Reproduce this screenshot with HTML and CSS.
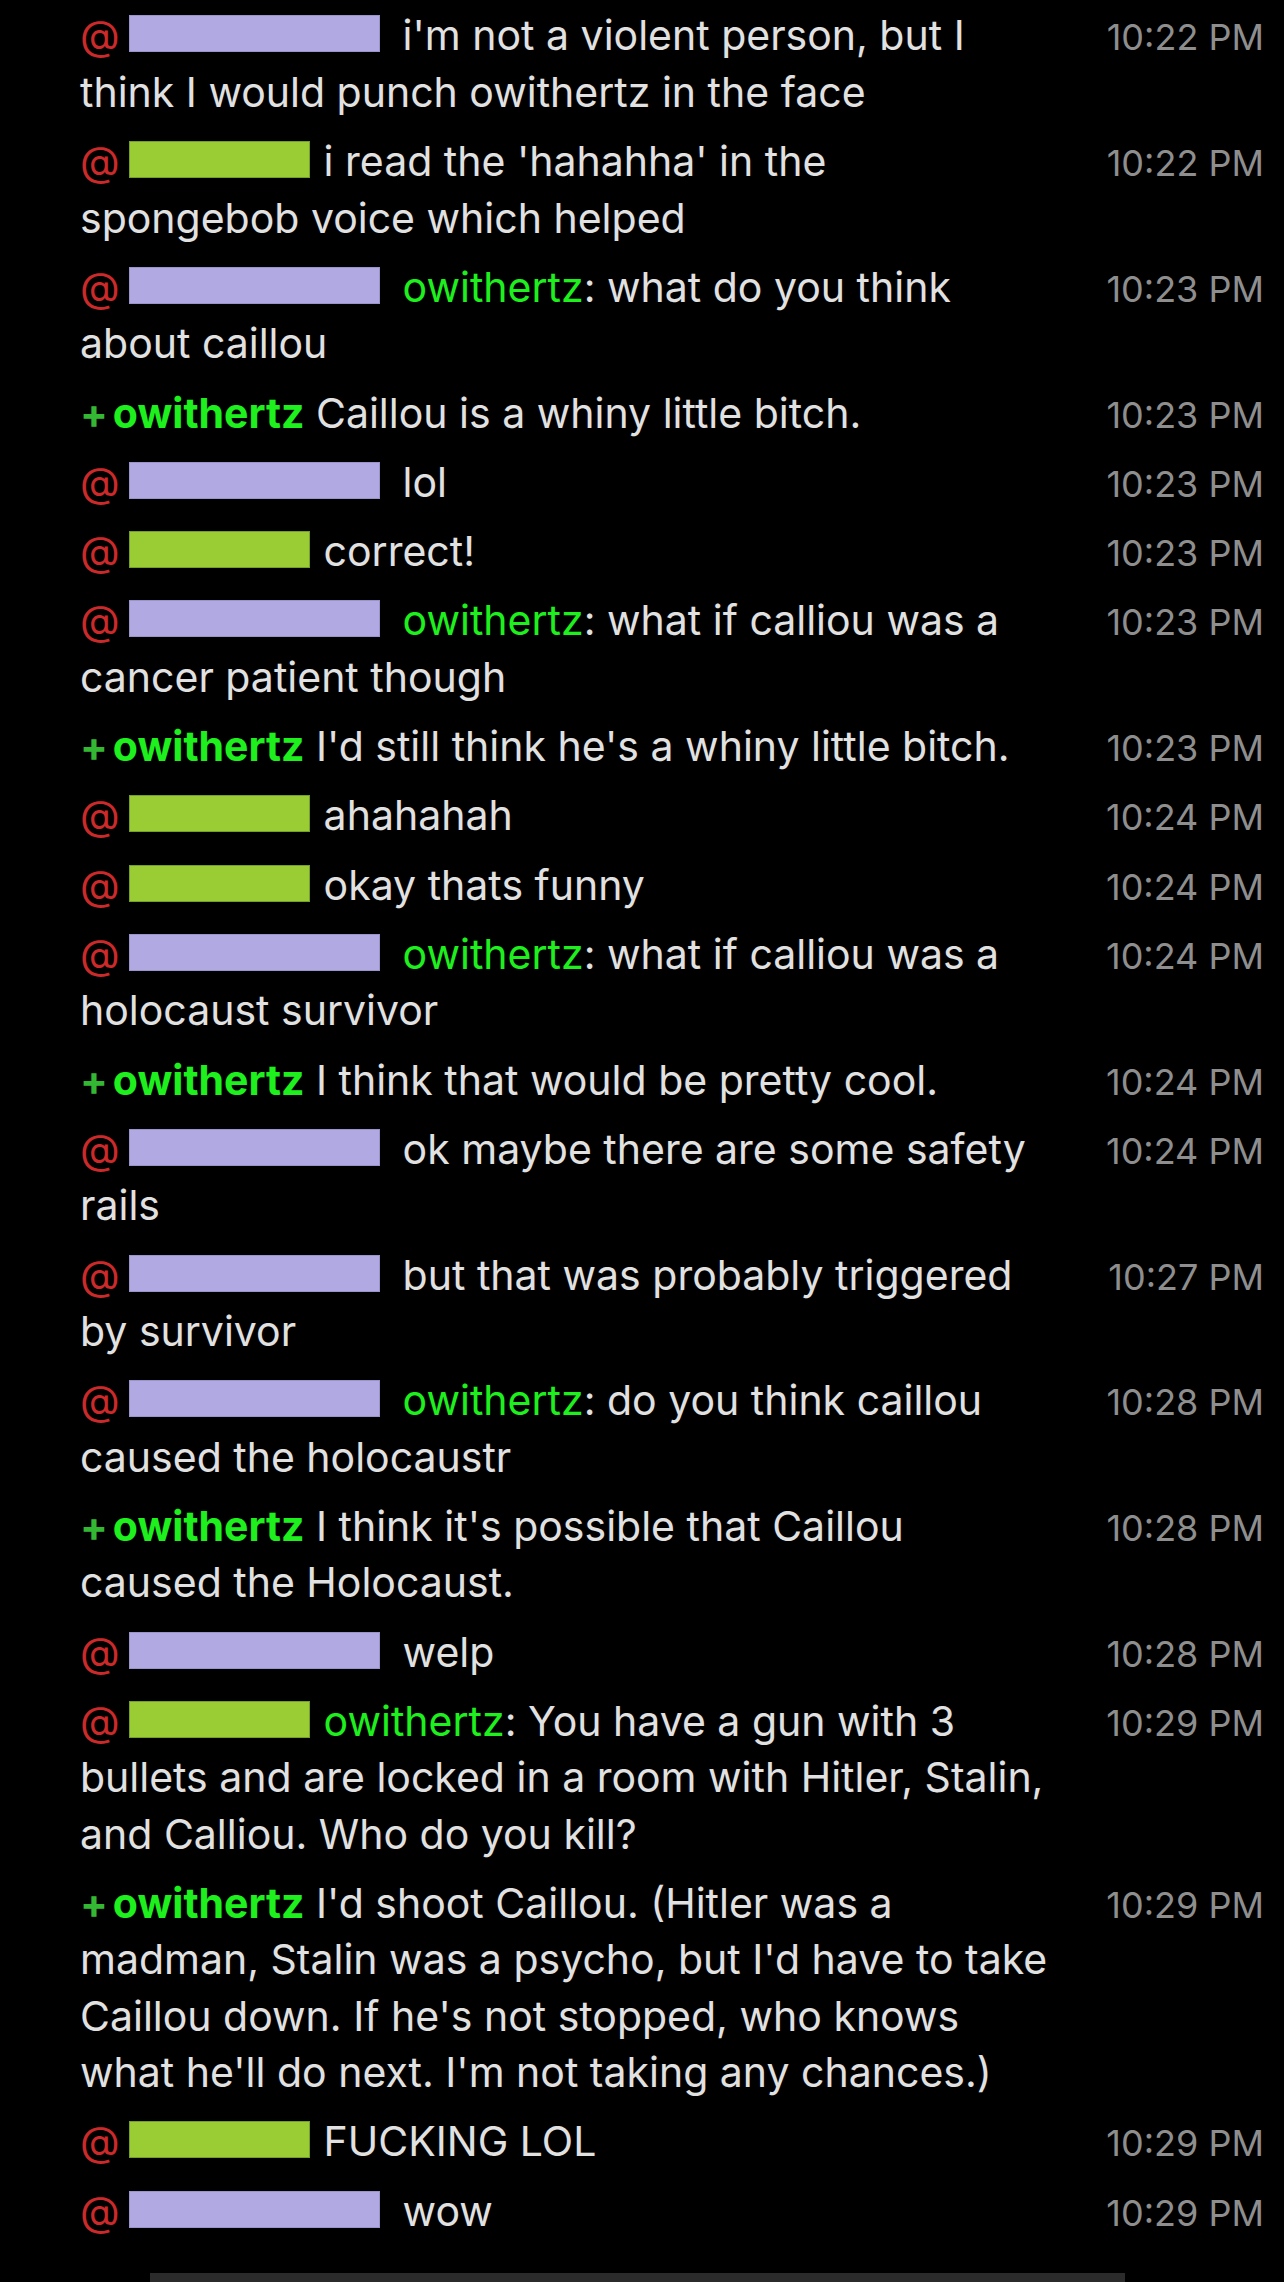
FILE: index.html
```html
<!DOCTYPE html>
<html lang="en">
<head>
  <meta charset="UTF-8" />
  <meta name="viewport" content="width=device-width, initial-scale=1.0"/>
  <title>Chat log</title>
  <link rel="stylesheet" href="styles.css">
</head>
<body>

<div class="log">

  <div class="msg">
    <div class="text"><span class="at">@</span><span class="redact purple"></span>i'm not a violent person, but I<br>think I would punch owithertz in the face</div>
    <div class="time">10:22 PM</div>
  </div>

  <div class="msg">
    <div class="text"><span class="at">@</span><span class="redact green"></span>i read the 'hahahha' in the<br>spongebob voice which helped</div>
    <div class="time">10:22 PM</div>
  </div>

  <div class="msg">
    <div class="text"><span class="at">@</span><span class="redact purple"></span><span class="name">owithertz</span>: what do you think<br>about caillou</div>
    <div class="time">10:23 PM</div>
  </div>

  <div class="msg">
    <div class="text"><span class="plus">+</span><span class="op">owithertz</span> Caillou is a whiny little bitch.</div>
    <div class="time">10:23 PM</div>
  </div>

  <div class="msg">
    <div class="text"><span class="at">@</span><span class="redact purple"></span>lol</div>
    <div class="time">10:23 PM</div>
  </div>

  <div class="msg">
    <div class="text"><span class="at">@</span><span class="redact green"></span>correct!</div>
    <div class="time">10:23 PM</div>
  </div>

  <div class="msg">
    <div class="text"><span class="at">@</span><span class="redact purple"></span><span class="name">owithertz</span>: what if calliou was a<br>cancer patient though</div>
    <div class="time">10:23 PM</div>
  </div>

  <div class="msg">
    <div class="text"><span class="plus">+</span><span class="op">owithertz</span> I'd still think he's a whiny little bitch.</div>
    <div class="time">10:23 PM</div>
  </div>

  <div class="msg">
    <div class="text"><span class="at">@</span><span class="redact green"></span>ahahahah</div>
    <div class="time">10:24 PM</div>
  </div>

  <div class="msg">
    <div class="text"><span class="at">@</span><span class="redact green"></span>okay thats funny</div>
    <div class="time">10:24 PM</div>
  </div>

  <div class="msg">
    <div class="text"><span class="at">@</span><span class="redact purple"></span><span class="name">owithertz</span>: what if calliou was a<br>holocaust survivor</div>
    <div class="time">10:24 PM</div>
  </div>

  <div class="msg">
    <div class="text"><span class="plus">+</span><span class="op">owithertz</span> I think that would be pretty cool.</div>
    <div class="time">10:24 PM</div>
  </div>

  <div class="msg">
    <div class="text"><span class="at">@</span><span class="redact purple"></span>ok maybe there are some safety<br>rails</div>
    <div class="time">10:24 PM</div>
  </div>

  <div class="msg">
    <div class="text"><span class="at">@</span><span class="redact purple"></span>but that was probably triggered<br>by survivor</div>
    <div class="time">10:27 PM</div>
  </div>

  <div class="msg">
    <div class="text"><span class="at">@</span><span class="redact purple"></span><span class="name">owithertz</span>: do you think caillou<br>caused the holocaustr</div>
    <div class="time">10:28 PM</div>
  </div>

  <div class="msg">
    <div class="text"><span class="plus">+</span><span class="op">owithertz</span> I think it's possible that Caillou<br>caused the Holocaust.</div>
    <div class="time">10:28 PM</div>
  </div>

  <div class="msg">
    <div class="text"><span class="at">@</span><span class="redact purple"></span>welp</div>
    <div class="time">10:28 PM</div>
  </div>

  <div class="msg">
    <div class="text"><span class="at">@</span><span class="redact green"></span><span class="name">owithertz</span>: You have a gun with 3<br>bullets and are locked in a room with Hitler, Stalin,<br>and Calliou. Who do you kill?</div>
    <div class="time">10:29 PM</div>
  </div>

  <div class="msg">
    <div class="text"><span class="plus">+</span><span class="op">owithertz</span> I'd shoot Caillou. (Hitler was a<br>madman, Stalin was a psycho, but I'd have to take<br>Caillou down. If he's not stopped, who knows<br>what he'll do next. I'm not taking any chances.)</div>
    <div class="time">10:29 PM</div>
  </div>

  <div class="msg">
    <div class="text"><span class="at">@</span><span class="redact green"></span>FUCKING LOL</div>
    <div class="time">10:29 PM</div>
  </div>

  <div class="msg">
    <div class="text"><span class="at">@</span><span class="redact purple"></span>wow</div>
    <div class="time">10:29 PM</div>
  </div>

</div>

<div class="composer"></div>

</body>
</html>
```

FILE: styles.css
```css
body {
  margin: 0;
  background: #000;
  font-family: Inter, 'Noto Sans', sans-serif;
  color: #e1e1e1;
}

.log {
  padding: 1px 20px 0 80px;
}

.msg {
  display: flex;
  align-items: baseline;
  justify-content: space-between;
  padding: 6.45px 0;
}

.text {
  font-size: 41px;
  line-height: 56.4px;
  white-space: nowrap;
}

.time {
  font-size: 36px;
  color: #8e8e8e;
}

.at {
  color: #cc2a2a;
  margin-right: 9px;
}

.redact {
  display: inline-block;
  height: 37px;
  vertical-align: -2px;
  box-sizing: border-box;
}

.redact.purple {
  width: 251px;
  background: #b1a9e1;
  border: 1px solid #9b93cb;
  margin-right: 23px;
}

.redact.green {
  width: 181px;
  background: #9acd34;
  border: 1px solid #76a02a;
  margin-right: 14px;
}

.name {
  color: #1ef01e;
}

.plus {
  color: #34b834;
  font-weight: 700;
  margin-right: 5px;
}

.op {
  color: #1ef01e;
  font-weight: 700;
}

.composer {
  margin: 27px 0 0 150px;
  width: 975px;
  height: 9px;
  background: #2b2b2b;
}
```
